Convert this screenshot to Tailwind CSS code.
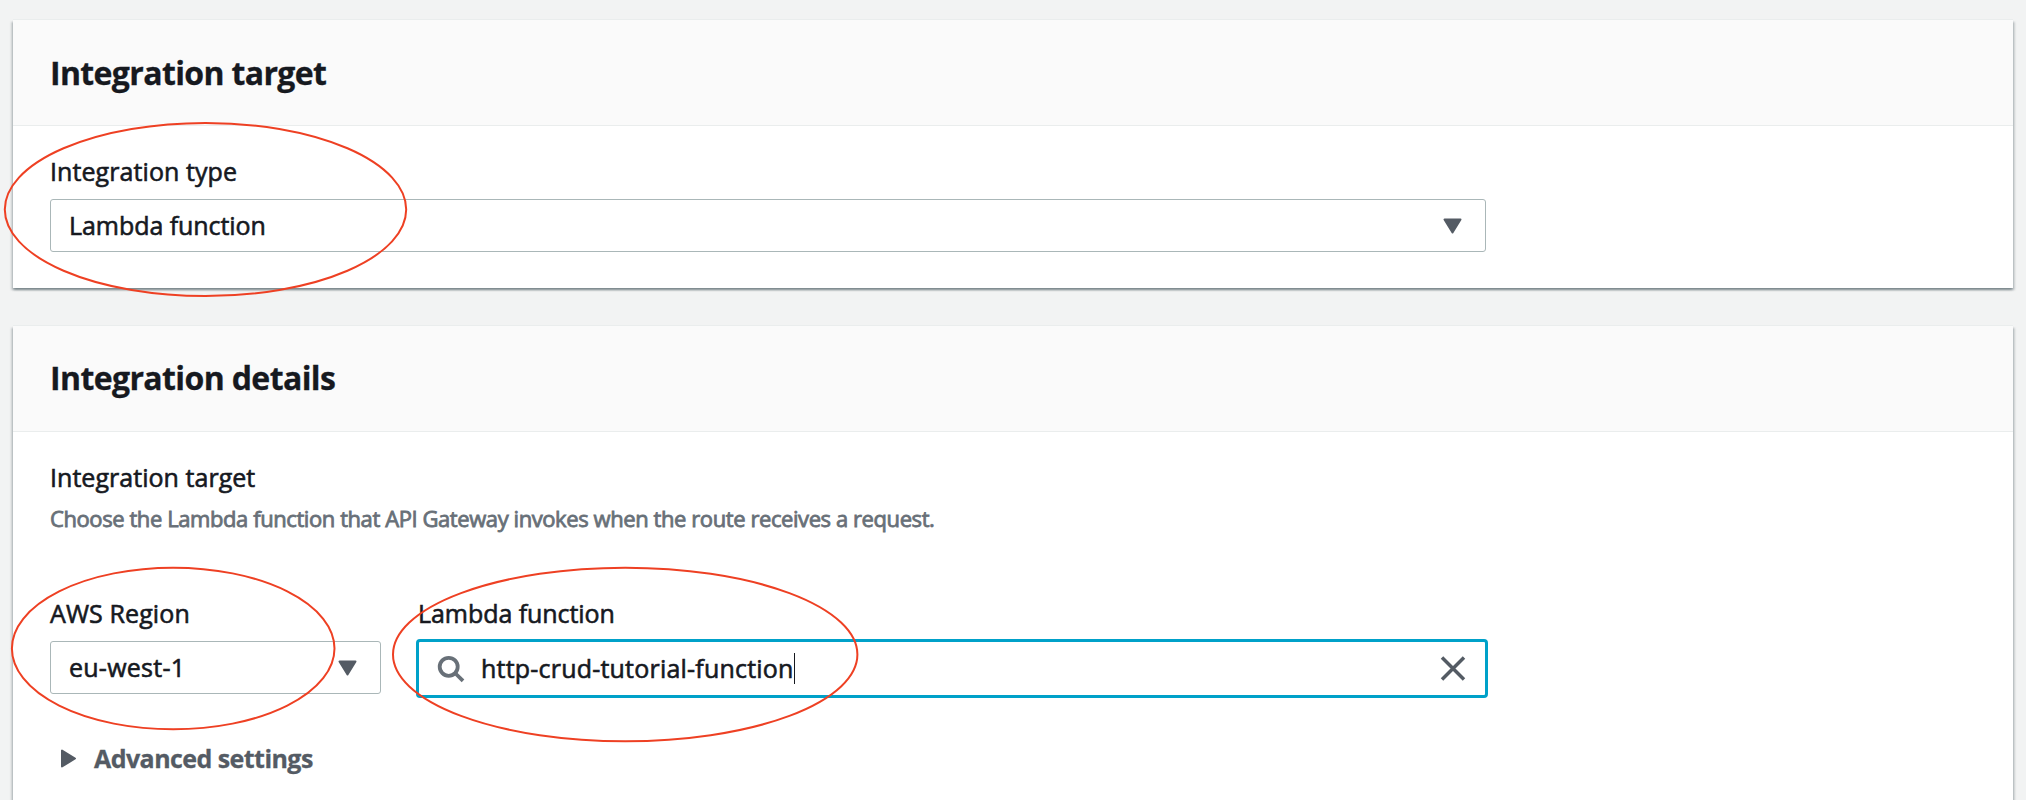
<!DOCTYPE html>
<html lang="en">
<head>
<meta charset="utf-8">
<title>Integration</title>
<script src="https://cdn.jsdelivr.net/npm/@tailwindcss/browser@4"></script>
</head>
<body class="relative h-[800px] overflow-hidden bg-[#f2f3f3] px-[13px] pt-5 font-['Open_Sans',sans-serif] text-[25px] leading-[30px] text-[#16191f]">

<section class="h-[268px] bg-white shadow-[0_-1px_0_0_#eaeded,0_2px_2px_0_rgba(0,28,36,0.3),2px_2px_2px_0_rgba(0,28,36,0.15),-2px_2px_2px_0_rgba(0,28,36,0.15)]">
  <header class="h-[106px] border-b border-[#eaeded] bg-[#fafafa] pl-[37px] pt-[33px]">
    <h2 class="text-[32px] font-bold leading-10 tracking-[-0.64px] [-webkit-text-stroke:0.3px]">Integration target</h2>
  </header>
  <div class="pl-[37px] pt-[30px]">
    <div class="tracking-[0.08px] [-webkit-text-stroke:0.6px]">Integration type</div>
    <div class="mt-[13px] flex h-[53px] w-[1436px] items-center justify-between rounded-[3px] border border-[#aab7b8] pl-[18px] pr-[23px]">
      <span class="pb-0.5 tracking-[-0.06px] [-webkit-text-stroke:0.6px]">Lambda function</span>
      <svg class="h-4 w-[19px]" viewBox="0 0 19 16" fill="#545b64" stroke="#545b64" stroke-width="2" stroke-linejoin="round"><path d="M1.5 1.5h16l-8 13z"/></svg>
    </div>
  </div>
</section>

<section class="mt-[38px] h-[474px] bg-white shadow-[0_-1px_0_0_#eaeded,0_2px_2px_0_rgba(0,28,36,0.3),2px_2px_2px_0_rgba(0,28,36,0.15),-2px_2px_2px_0_rgba(0,28,36,0.15)]">
  <header class="h-[106px] border-b border-[#eaeded] bg-[#fafafa] pl-[37px] pt-8">
    <h2 class="text-[32px] font-bold leading-10 tracking-[-0.62px] [-webkit-text-stroke:0.3px]">Integration details</h2>
  </header>
  <div class="pl-[37px] pt-[30px]">
    <div class="tracking-[0.04px] [-webkit-text-stroke:0.6px]">Integration target</div>
    <p class="mt-3 text-[22px] leading-7 tracking-[-0.42px] text-[#687078] [-webkit-text-stroke:0.8px]">Choose the Lambda function that API Gateway invokes when the route receives a request.</p>
    <div class="mt-[66px] flex gap-[35px]">
      <div class="w-[331px]">
        <div class="tracking-[0.1px] [-webkit-text-stroke:0.6px]">AWS Region</div>
        <div class="mt-[13px] flex h-[53px] items-center justify-between rounded-[3px] border border-[#aab7b8] pl-[18px] pr-[23px]">
          <span class="pb-0.5 tracking-[0.25px] [-webkit-text-stroke:0.6px]">eu-west-1</span>
          <svg class="h-4 w-[19px]" viewBox="0 0 19 16" fill="#545b64" stroke="#545b64" stroke-width="2" stroke-linejoin="round"><path d="M1.5 1.5h16l-8 13z"/></svg>
        </div>
      </div>
      <div class="w-[1072px]">
        <div class="pl-0.5 tracking-[-0.06px] [-webkit-text-stroke:0.6px]">Lambda function</div>
        <div class="mt-[11px] flex h-[59px] items-center rounded-[4px] border-3 border-[#00a1c9] pl-[18px] pr-[18px]">
          <svg class="h-7 w-7" viewBox="0 0 28 28" fill="none" stroke="#687078" stroke-width="3.8"><circle cx="11.7" cy="11.8" r="9"/><path d="M18 18l8 7.8"/></svg>
          <span class="ml-[16px] pb-0.5 tracking-[0.21px] [-webkit-text-stroke:0.6px]">http-crud-tutorial-function</span>
          <span class="h-[31px] w-px bg-[#16191f]"></span>
          <svg class="ml-auto h-7 w-7" viewBox="0 0 28 28" fill="none" stroke="#545b64" stroke-width="3.5"><path d="M3 2.5l22 22M25 2.5L3 24.5"/></svg>
        </div>
      </div>
    </div>
    <div class="mt-[45px] flex items-center pl-[10px] font-bold tracking-[-0.56px] text-[#545b64] [-webkit-text-stroke:0.3px]">
      <svg class="h-[19px] w-4" viewBox="0 0 16 19" fill="#545b64" stroke="#545b64" stroke-width="2" stroke-linejoin="round"><path d="M2 1.5v16l13-8z"/></svg>
      <span class="ml-[18px]">Advanced settings</span>
    </div>
  </div>
</section>

<svg class="absolute left-0 top-0 h-[800px] w-[2026px]" viewBox="0 0 2026 800" fill="none" stroke="#ee4023" stroke-width="2">
  <ellipse cx="205.5" cy="209.5" rx="200.7" ry="86.6"/>
  <ellipse cx="173.2" cy="648.5" rx="161.3" ry="80.8"/>
  <ellipse cx="625.2" cy="654.5" rx="232.2" ry="86.8"/>
</svg>
</body>
</html>
